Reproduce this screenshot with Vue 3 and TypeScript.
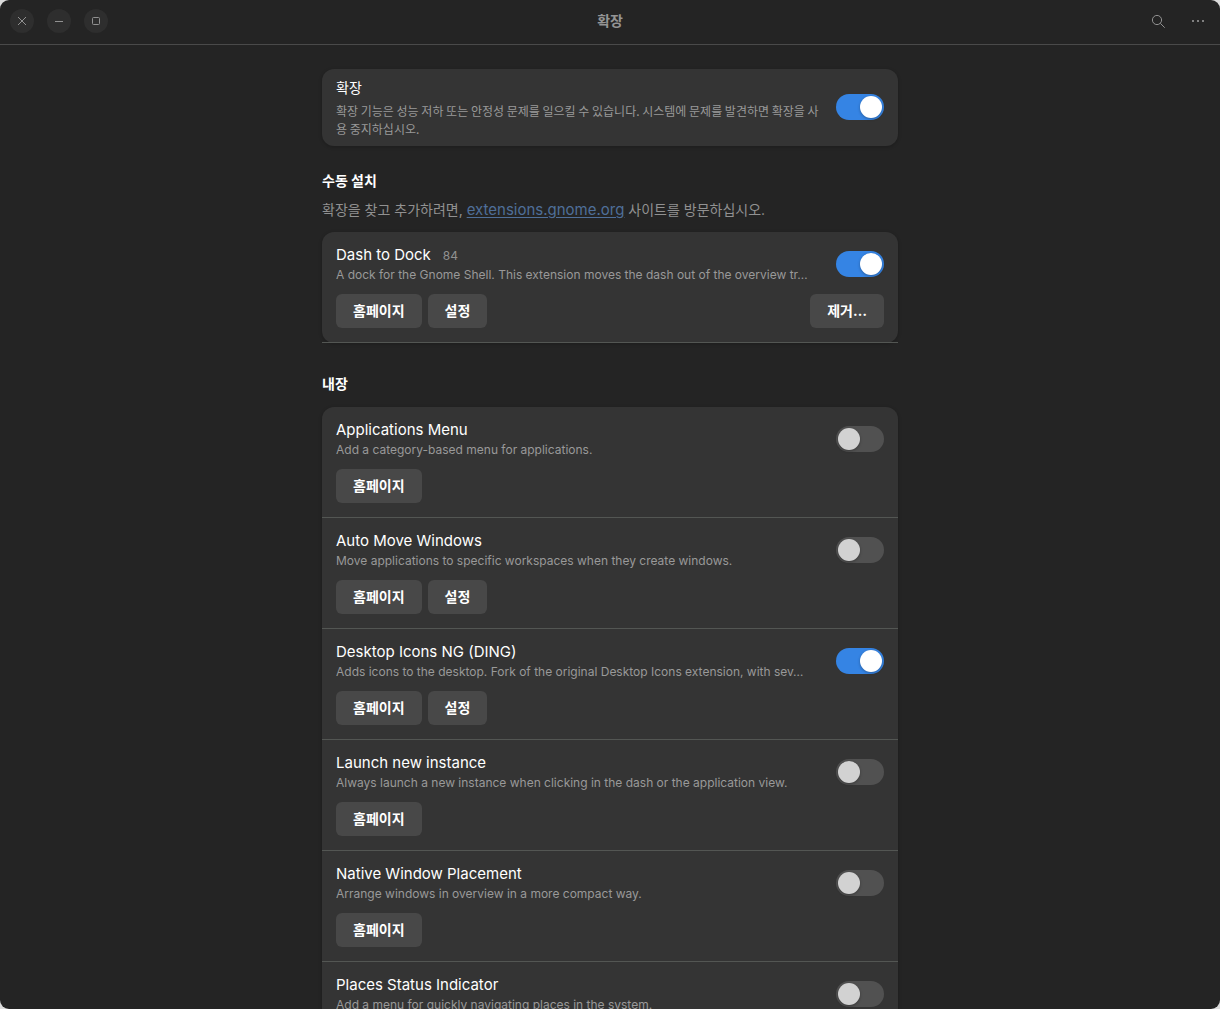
<script setup lang="ts">
import { ref } from 'vue'

interface Extension {
  id: string
  name: string
  version?: string
  description: string
  enabled: boolean
  hasSettings: boolean
  removable: boolean
}

interface Section {
  id: string
  title: string
  showHint: boolean
  items: Extension[]
}

const extensionsEnabled = ref(true)

const sections = ref<Section[]>([
  {
    id: 'manual',
    title: '수동 설치',
    showHint: true,
    items: [
      {
        id: 'dash-to-dock',
        name: 'Dash to Dock',
        version: '84',
        description:
          'A dock for the Gnome Shell. This extension moves the dash out of the overview tr…',
        enabled: true,
        hasSettings: true,
        removable: true,
      },
    ],
  },
  {
    id: 'builtin',
    title: '내장',
    showHint: false,
    items: [
      {
        id: 'apps-menu',
        name: 'Applications Menu',
        description: 'Add a category-based menu for applications.',
        enabled: false,
        hasSettings: false,
        removable: false,
      },
      {
        id: 'auto-move-windows',
        name: 'Auto Move Windows',
        description: 'Move applications to specific workspaces when they create windows.',
        enabled: false,
        hasSettings: true,
        removable: false,
      },
      {
        id: 'ding',
        name: 'Desktop Icons NG (DING)',
        description:
          'Adds icons to the desktop. Fork of the original Desktop Icons extension, with sev…',
        enabled: true,
        hasSettings: true,
        removable: false,
      },
      {
        id: 'launch-new-instance',
        name: 'Launch new instance',
        description:
          'Always launch a new instance when clicking in the dash or the application view.',
        enabled: false,
        hasSettings: false,
        removable: false,
      },
      {
        id: 'native-window-placement',
        name: 'Native Window Placement',
        description: 'Arrange windows in overview in a more compact way.',
        enabled: false,
        hasSettings: false,
        removable: false,
      },
      {
        id: 'places-menu',
        name: 'Places Status Indicator',
        description: 'Add a menu for quickly navigating places in the system.',
        enabled: false,
        hasSettings: false,
        removable: false,
      },
    ],
  },
])
</script>

<template>
  <div class="window">
    <header class="titlebar">
      <div class="side">
        <button class="window-button" type="button" aria-label="닫기">
          <svg width="16" height="16" viewBox="0 0 16 16">
            <path d="M4 4l8 8M12 4l-8 8" />
          </svg>
        </button>
        <button class="window-button" type="button" aria-label="최소화">
          <svg width="16" height="16" viewBox="0 0 16 16">
            <path d="M4 8.5h8" />
          </svg>
        </button>
        <button class="window-button" type="button" aria-label="최대화">
          <svg width="16" height="16" viewBox="0 0 16 16">
            <rect x="4.5" y="4.5" width="7" height="7" rx="1" />
          </svg>
        </button>
      </div>
      <h1 class="window-title">확장</h1>
      <div class="side end">
        <button class="tool-button" type="button" aria-label="검색">
          <svg width="16" height="16" viewBox="0 0 16 16">
            <circle cx="7" cy="7" r="4.6" />
            <path d="M10.3 10.3l4.4 4.4" />
          </svg>
        </button>
        <button class="tool-button" type="button" aria-label="메뉴">
          <svg class="dots" width="16" height="16" viewBox="0 0 16 16">
            <rect x="2" y="7" width="2" height="2" />
            <rect x="7" y="7" width="2" height="2" />
            <rect x="12" y="7" width="2" height="2" />
          </svg>
        </button>
      </div>
    </header>

    <main class="scroller">
      <div class="content">
        <label class="card master">
          <span class="master-text">
            <span class="master-title">확장</span>
            <span class="master-description">확장 기능은 성능 저하 또는 안정성 문제를 일으킬 수 있습니다. 시스템에 문제를 발견하면 확장을 사용 중지하십시오.</span>
          </span>
          <input v-model="extensionsEnabled" class="switch" type="checkbox" role="switch" />
        </label>

        <section v-for="section in sections" :key="section.id" class="section">
          <h2 class="section-title">{{ section.title }}</h2>
          <p v-if="section.showHint" class="hint">
            확장을 찾고 추가하려면, <a href="https://extensions.gnome.org">extensions.gnome.org</a> 사이트를 방문하십시오.
          </p>
          <ul class="card list">
            <li v-for="item in section.items" :key="item.id" class="row">
              <div class="row-head">
                <label class="row-text" :for="item.id">
                  <span class="name-line">
                    <span class="name">{{ item.name }}</span>
                    <span v-if="item.version" class="version">{{ item.version }}</span>
                  </span>
                  <span class="description">{{ item.description }}</span>
                </label>
                <input
                  :id="item.id"
                  v-model="item.enabled"
                  class="switch"
                  type="checkbox"
                  role="switch"
                />
              </div>
              <div class="actions">
                <button class="action" type="button">홈페이지</button>
                <button v-if="item.hasSettings" class="action" type="button">설정</button>
                <button v-if="item.removable" class="action remove" type="button">제거…</button>
              </div>
            </li>
          </ul>
        </section>
      </div>
    </main>
  </div>
</template>

<style>
body {
  margin: 0;
  background: #dcdcdc;
}
</style>

<style scoped>
.window {
  display: flex;
  flex-direction: column;
  height: 100vh;
  overflow: hidden;
  border-radius: 9px;
  background: #242424;
  color: #ffffff;
  font-family: Inter, 'Noto Sans CJK KR', sans-serif;
  font-size: 14px;
}

.titlebar {
  display: flex;
  align-items: center;
  flex: none;
  box-sizing: border-box;
  height: 45px;
  padding: 0 10px 2px;
  border-bottom: 1px solid #4a4a4a;
}

.side {
  display: flex;
  flex: 1;
  align-items: center;
  gap: 13px;
}

.side.end {
  justify-content: flex-end;
  gap: 16px;
}

.window-title {
  margin: 0;
  color: #949494;
  font-size: 14px;
  font-weight: 700;
  line-height: 20px;
}

.window-button,
.tool-button {
  display: flex;
  align-items: center;
  justify-content: center;
  width: 24px;
  height: 24px;
  padding: 0;
  border: 0;
  border-radius: 50%;
  background: none;
  color: #919191;
}

.window-button {
  background: #2e2e2e;
}

.titlebar svg {
  fill: none;
  stroke: currentColor;
  stroke-width: 1;
}

.titlebar .dots {
  fill: #808080;
  stroke: none;
}

.scroller {
  flex: 1;
  min-height: 0;
  overflow-y: auto;
  scrollbar-width: none;
}

.content {
  max-width: 576px;
  margin: 0 auto;
  padding: 24px;
}

.card {
  border-radius: 12px;
  background: #343434;
  box-shadow: 0 1px 3px 1px rgba(0, 0, 0, 0.15);
}

.master {
  display: flex;
  align-items: center;
  gap: 12px;
  padding: 7px 14px 8px;
}

.master-text {
  display: flex;
  flex: 1;
  flex-direction: column;
  min-width: 0;
  gap: 2px;
}

.master-title {
  line-height: 24px;
}

.master-description {
  color: #999999;
  font-family: 'Noto Sans CJK KR', sans-serif;
  font-size: 12px;
  line-height: 18px;
}

.section {
  margin-top: 24px;
}

.section + .section {
  margin-top: 30px;
}

.section-title {
  margin: 0;
  font-size: 14px;
  font-weight: 700;
  line-height: 22px;
}

.hint {
  margin: 6px 0 0;
  color: #919191;
  line-height: 24px;
}

.hint a {
  color: #4f6f99;
  font-size: 15px;
  text-underline-offset: 2px;
}

.list {
  margin: 12px 0 0;
  padding: 0;
  list-style: none;
}

.hint + .list {
  margin-top: 10px;
}

.row {
  padding: 12px 14px 14px;
  border-bottom: 1px solid #535653;
}

.row-head {
  display: flex;
  align-items: center;
}

.row-text {
  display: flex;
  flex: 1;
  flex-direction: column;
  min-width: 0;
}

.name-line {
  display: flex;
  align-items: baseline;
  gap: 12px;
  line-height: 22px;
}

.name {
  font-size: 15px;
}

.version {
  color: #919191;
  font-size: 12px;
  line-height: 18px;
}

.description {
  overflow: hidden;
  color: #999999;
  font-size: 12px;
  line-height: 18px;
  text-overflow: ellipsis;
  white-space: nowrap;
}

.actions {
  display: flex;
  gap: 6px;
  margin-top: 10px;
}

.action {
  height: 34px;
  padding: 0 17px 2px;
  border: 0;
  border-radius: 6px;
  background: #484848;
  color: #ffffff;
  font-family: inherit;
  font-size: 14px;
  font-weight: 700;
}

.remove {
  margin-left: auto;
}

.switch {
  display: flex;
  flex: none;
  align-items: center;
  box-sizing: border-box;
  width: 48px;
  height: 26px;
  margin: 0;
  padding: 2px;
  border-radius: 13px;
  background: #515151;
  appearance: none;
}

.switch::before {
  width: 22px;
  height: 22px;
  border-radius: 50%;
  background: #d2d2d2;
  box-shadow: 0 1px 3px rgba(0, 0, 0, 0.3);
  content: '';
}

.switch:checked {
  justify-content: flex-end;
  background: #3584e4;
}

.switch:checked::before {
  background: #ffffff;
}
</style>
